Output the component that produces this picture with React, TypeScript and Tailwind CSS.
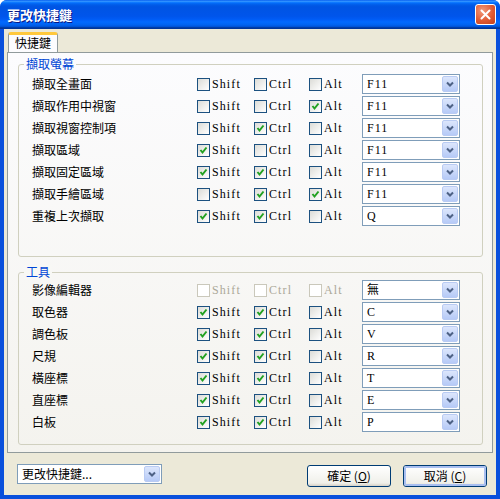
import React from 'react';

type Row = { label: string; shift: boolean; ctrl: boolean; alt: boolean; key: string; disabled?: boolean };

const captureRows: Row[] = [
  { label: '擷取全畫面', shift: false, ctrl: false, alt: false, key: 'F11' },
  { label: '擷取作用中視窗', shift: false, ctrl: false, alt: true, key: 'F11' },
  { label: '擷取視窗控制項', shift: false, ctrl: true, alt: false, key: 'F11' },
  { label: '擷取區域', shift: true, ctrl: false, alt: false, key: 'F11' },
  { label: '擷取固定區域', shift: true, ctrl: true, alt: false, key: 'F11' },
  { label: '擷取手繪區域', shift: false, ctrl: true, alt: true, key: 'F11' },
  { label: '重複上次擷取', shift: true, ctrl: true, alt: false, key: 'Q' },
];

const toolRows: Row[] = [
  { label: '影像編輯器', shift: false, ctrl: false, alt: false, key: '無', disabled: true },
  { label: '取色器', shift: true, ctrl: true, alt: false, key: 'C' },
  { label: '調色板', shift: true, ctrl: true, alt: false, key: 'V' },
  { label: '尺規', shift: true, ctrl: true, alt: false, key: 'R' },
  { label: '橫座標', shift: true, ctrl: true, alt: false, key: 'T' },
  { label: '直座標', shift: true, ctrl: true, alt: false, key: 'E' },
  { label: '白板', shift: true, ctrl: true, alt: false, key: 'P' },
];

const cjk = "font-['Noto_Sans_CJK_TC','Noto_Sans_CJK_SC',sans-serif]";
const latin = "font-['Liberation_Serif','Noto_Sans_CJK_TC',serif]";

function Checkbox({ checked, disabled }: { checked: boolean; disabled?: boolean }) {
  return (
    <span
      className={`flex h-[13px] w-[13px] shrink-0 items-center justify-center border ${
        disabled
          ? 'border-[#CAC8BB] bg-white'
          : 'border-[#1C5180] bg-[linear-gradient(135deg,#DCDCD7,#FFFFFF)]'
      }`}
    >
      {checked ? (
        <svg width="9" height="9" viewBox="0 0 9 9" aria-hidden>
          <polyline points="1.5,4 3.5,6.5 7.5,1.5" fill="none" stroke="#21A121" strokeWidth="2" />
        </svg>
      ) : null}
    </span>
  );
}

function CheckLabel({ text, checked, disabled, width }: { text: string; checked: boolean; disabled?: boolean; width: string }) {
  return (
    <div className={`flex items-center gap-[2px] ${width}`}>
      <Checkbox checked={checked} disabled={disabled} />
      <span className={`${latin} text-[12px] leading-none tracking-[1.1px] ${disabled ? 'text-[#ACA899]' : 'text-black'}`}>
        {text}
      </span>
    </div>
  );
}

function DropButton() {
  return (
    <span className="m-[1px] flex w-[16px] items-center justify-center rounded-[2px] border border-[#B9CBF3] bg-[linear-gradient(to_bottom,#DCE6FC,#B6CAF7)]">
      <svg width="8" height="6" viewBox="0 0 8 6" aria-hidden>
        <polyline points="1,1.5 4,4.5 7,1.5" fill="none" stroke="#4D6185" strokeWidth="2" />
      </svg>
    </span>
  );
}

function Combo({ value, width, textClass }: { value: string; width: string; textClass: string }) {
  return (
    <div className={`flex h-[20px] ${width} border border-[#7F9DB9] bg-white`}>
      <span className={`flex flex-1 items-center pl-[4px] text-black ${textClass}`}>{value}</span>
      <DropButton />
    </div>
  );
}

function ShortcutRow({ row }: { row: Row }) {
  return (
    <div className="flex h-[20px] items-center">
      <span className={`w-[165px] ${cjk} text-[12px] text-black`}>{row.label}</span>
      <CheckLabel text="Shift" checked={row.shift} disabled={row.disabled} width="w-[57px]" />
      <CheckLabel text="Ctrl" checked={row.ctrl} disabled={row.disabled} width="w-[55px]" />
      <CheckLabel text="Alt" checked={row.alt} disabled={row.disabled} width="w-[53px]" />
      <Combo value={row.key} width="w-[98px]" textClass={`${latin} text-[12px] tracking-[1px]`} />
    </div>
  );
}

function Group({ title, rows, className, legendBg }: { title: string; rows: Row[]; className: string; legendBg: string }) {
  return (
    <div className={`relative rounded-[3px] border border-[#D0D0BF] pl-[13px] ${className}`}>
      <span className={`absolute left-[5px] top-[-8px] px-[2px] ${legendBg} ${cjk} text-[12px] leading-[14px] text-[#0046D5]`}>
        {title}
      </span>
      <div className="flex flex-col gap-[2px]">
        {rows.map((row) => (
          <ShortcutRow key={row.label} row={row} />
        ))}
      </div>
    </div>
  );
}

function XpButton({ label, hotkey, focused }: { label: string; hotkey: string; focused?: boolean }) {
  return (
    <button
      type="button"
      className="h-[22px] w-[84px] rounded-[3px] border border-[#003C74] bg-[linear-gradient(to_bottom,#FFFFFF,#F0F0EA_85%,#D6D0C5)] p-0"
    >
      <span
        className={`flex h-full w-full items-center justify-center rounded-[2px] ${
          focused ? 'border-2 border-[#A9BFF0]' : ''
        } ${cjk} text-[12px] text-black`}
      >
        {label}&nbsp;(<span className="underline">{hotkey}</span>)
      </span>
    </button>
  );
}

export default function App() {
  return (
    <div className="flex h-[499px] w-[500px] flex-col overflow-hidden rounded-t-[7px] bg-[#0A50DC]">
      <div className="flex h-[29px] shrink-0 items-center justify-between bg-[linear-gradient(to_bottom,#0058EE_0%,#3593FF_4%,#288EFF_6%,#127DFF_8%,#036FFC_10%,#0262EE_14%,#0057E5_20%,#0054E3_24%,#0055EB_56%,#005BF5_66%,#026AFE_76%,#0062EF_86%,#0052D6_92%,#0040AB_94%,#003092_100%)] pl-[7px] pr-[4px]">
        <span className={`${cjk} text-[13px] font-bold text-white [text-shadow:1px_1px_0_#0A1883]`}>更改快捷鍵</span>
        <span className="flex h-[21px] w-[21px] items-center justify-center rounded-[3px] border border-white bg-[radial-gradient(circle_at_35%_30%,#F29A7B,#E05A33_55%,#C2401B)]">
          <svg width="11" height="11" viewBox="0 0 11 11" aria-hidden>
            <path d="M1.5 1.5 L9.5 9.5 M9.5 1.5 L1.5 9.5" stroke="white" strokeWidth="2" strokeLinecap="round" />
          </svg>
        </span>
      </div>

      <div className="mx-[4px] mb-[4px] flex flex-1 flex-col bg-[#ECE9D8] px-[3px] pt-[4px]">
        <div className="flex h-[19px] items-end">
          <div className="ml-[1px] flex h-[20px] w-[50px] items-center justify-center rounded-t-[3px] border-x border-[#919B9C] border-t-[3px] border-t-[#FFC83C] bg-[#FCFCFE] pb-[1px]">
            <span className={`${cjk} text-[12px] leading-none text-black`}>快捷鍵</span>
          </div>
        </div>
        <div className="flex h-[401px] flex-col border border-[#919B9C] bg-[linear-gradient(to_bottom,#FCFCFE,#F4F3EE)] pl-[10px] pr-[9px]">
          <Group title="擷取螢幕" rows={captureRows} className="mt-[11px] pt-[9px] pb-[30px]" legendBg="bg-[#FCFCFD]" />
          <Group title="工具" rows={toolRows} className="mt-[15px] pt-[7px] pb-[12px]" legendBg="bg-[#F8F8F5]" />
        </div>

        <div className="flex items-start justify-between pl-[10px] pr-[6px] pt-[11px]">
          <Combo value="更改快捷鍵..." width="w-[145px]" textClass={`${cjk} text-[12px]`} />
          <div className="mt-[1px] flex gap-[12px]">
            <XpButton label="確定" hotkey="O" />
            <XpButton label="取消" hotkey="C" focused />
          </div>
        </div>
      </div>
    </div>
  );
}
